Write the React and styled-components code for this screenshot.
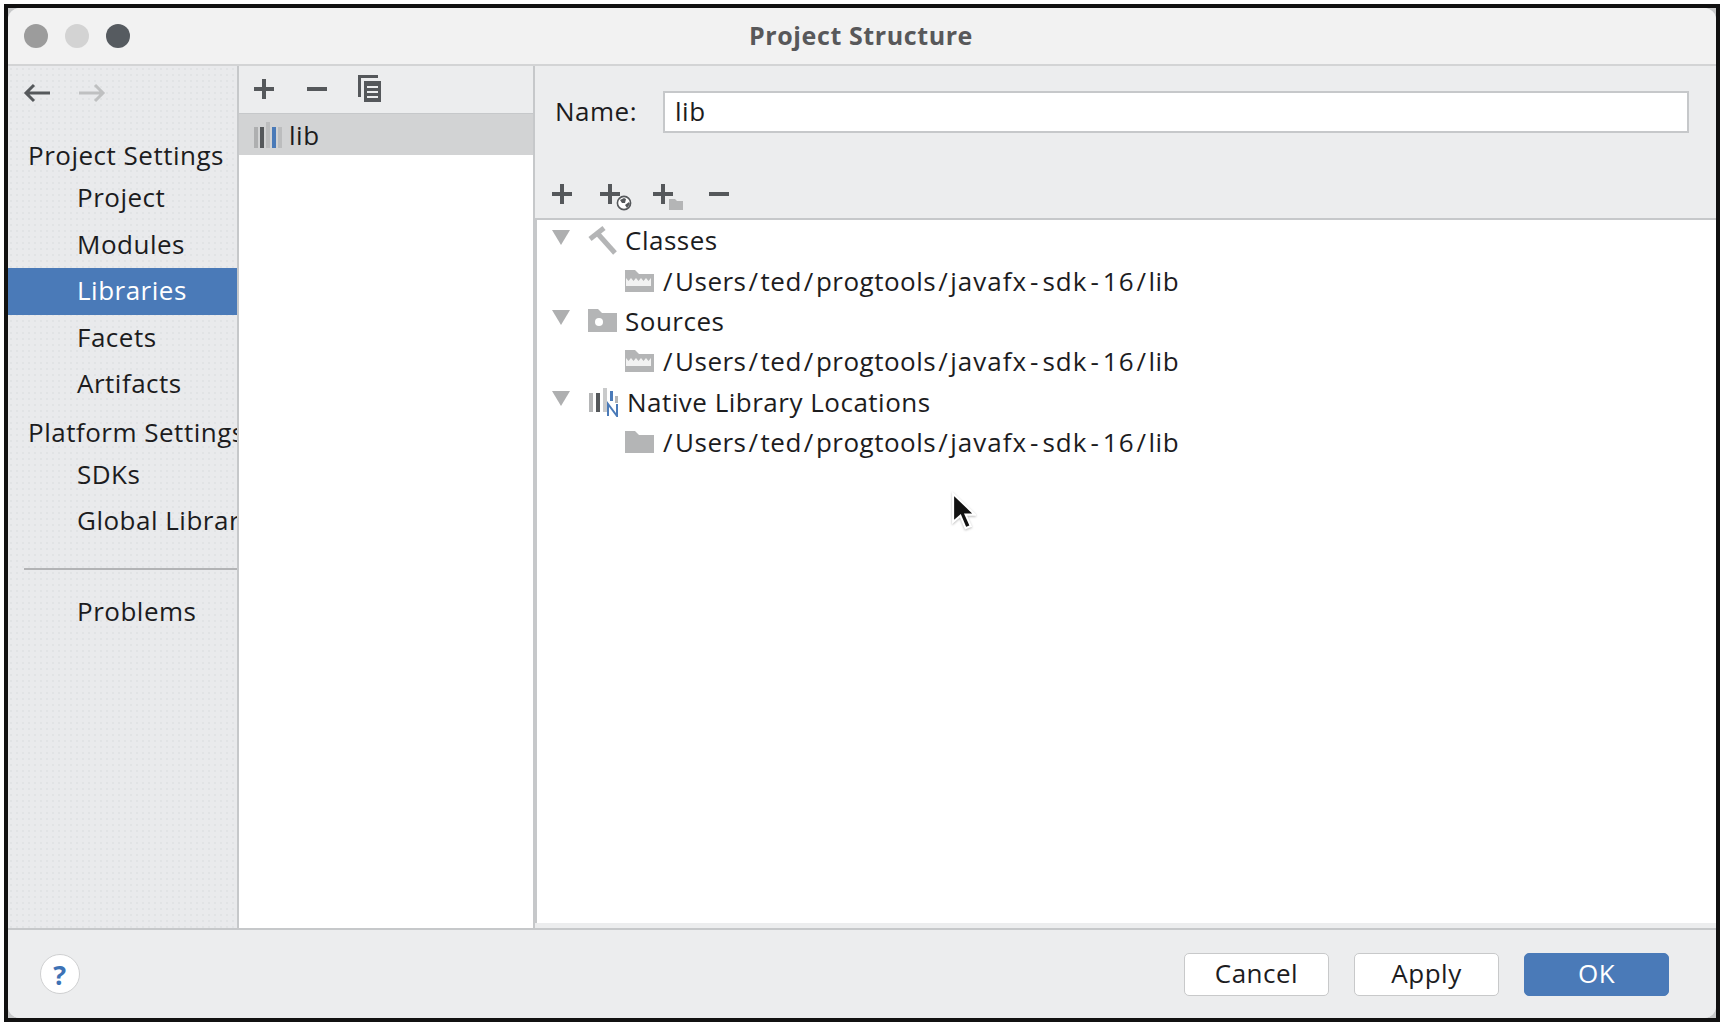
import React from "react";
import styled, { createGlobalStyle } from "styled-components";

const FONT = `"Open Sans", "DejaVu Sans", sans-serif`;
const ICON_DARK = "#55585b";
const ICON_GREY = "#b4b5b6";
const LINE = "#c6c8ca";
const BLUE = "#4a7ab8";

const GlobalStyle = createGlobalStyle`
  html, body {
    margin: 0;
    padding: 0;
    background: #fff;
  }
  * {
    box-sizing: border-box;
  }
`;

const Page = styled.div`
  width: 1725px;
  height: 1028px;
  padding: 4px 5px 6px 4px;
  background: #fff;
  font-family: ${FONT};
  font-size: 26px;
  letter-spacing: 0.5px;
  color: #1c1c1e;
`;

const Frame = styled.div`
  height: 100%;
  border: 4px solid #111;
  background: #c8c9ca;
`;

const Window = styled.div`
  height: 100%;
  display: flex;
  flex-direction: column;
  border-radius: 12px;
  overflow: hidden;
  background: #ecedee;
`;

const TitleBar = styled.div`
  position: relative;
  flex: 0 0 58px;
  display: flex;
  align-items: center;
  justify-content: center;
  padding-bottom: 2px;
  background: #f2f2f2;
  border-bottom: 2px solid #d3d4d5;
`;

const Lights = styled.div`
  position: absolute;
  left: 16px;
  top: 16px;
  display: flex;
  gap: 17px;
`;

const Light = styled.span`
  width: 24px;
  height: 24px;
  border-radius: 50%;
  background: ${(p) => p.$color};
`;

const Title = styled.div`
  font-weight: 700;
  font-size: 25px;
  letter-spacing: 0.6px;
  color: #58585a;
  transform: translateX(-1px);
`;

const Body = styled.div`
  flex: 1;
  min-height: 0;
  display: flex;
`;

const Sidebar = styled.nav`
  flex: 0 0 231px;
  overflow: hidden;
  white-space: nowrap;
  background-color: #e9eaec;
  background-image: radial-gradient(#e1e3e5 0.7px, transparent 0.9px);
  background-size: 6px 6px;
  border-right: 2px solid ${LINE};
  border-bottom: 2px solid ${LINE};
`;

const NavArrows = styled.div`
  height: 69px;
  padding: 17px 0 0 15px;
  display: flex;
  gap: 27px;
`;

const Heading = styled.div`
  height: 40px;
  margin-top: ${(p) => p.$gap || 0}px;
  padding-left: 20px;
  line-height: 40px;
`;

const NavItem = styled.div`
  height: 46.5px;
  padding-left: 69px;
  line-height: 44px;
  background: ${(p) => (p.$active ? BLUE : "transparent")};
  color: ${(p) => (p.$active ? "#fff" : "inherit")};
`;

const NavRule = styled.div`
  height: 2px;
  margin: 23px 0 19px 16px;
  background: #b2b3b5;
`;

const LibraryColumn = styled.section`
  flex: 0 0 296px;
  display: flex;
  flex-direction: column;
  border-right: 2px solid ${LINE};
  border-bottom: 2px solid ${LINE};
`;

const ListToolbar = styled.div`
  flex: 0 0 48px;
  padding: 0 0 2px 15px;
  display: flex;
  align-items: center;
  background: #ecedee;
  border-bottom: 1px solid ${LINE};
`;

const LibraryRow = styled.div`
  flex: 0 0 41px;
  display: flex;
  align-items: center;
  gap: 7px;
  padding-left: 15px;
  background: #d2d3d4;
`;

const LibraryFill = styled.div`
  flex: 1;
  background: #fff;
`;

const Detail = styled.section`
  flex: 1;
  display: flex;
  flex-direction: column;
  padding-bottom: 5px;
  border-bottom: 2px solid ${LINE};
`;

const NameRow = styled.div`
  flex: 0 0 67px;
  display: flex;
  align-items: flex-end;
  padding: 0 27px 0 20px;
  gap: 26px;
`;

const NameInput = styled.div`
  flex: 1;
  height: 42px;
  padding-left: 10px;
  line-height: 36px;
  background: #fff;
  border: 2px solid ${LINE};
`;

const NameLabel = styled.div`
  line-height: 40px;
  align-self: flex-end;
  margin-bottom: 2px;
`;

const TreeToolbar = styled.div`
  flex: 0 0 85px;
  display: flex;
  align-items: flex-start;
  padding: 51px 0 0 17px;
`;

const ToolSlot = styled.div`
  width: ${(p) => p.$width}px;
  display: flex;
`;

const Tree = styled.div`
  position: relative;
  flex: 1;
  background: #fff;
  border-top: 2px solid ${LINE};
  border-left: 2px solid ${LINE};
`;

const TreeRow = styled.div`
  height: 40.4px;
  display: flex;
  align-items: center;
  padding-left: ${(p) => (p.$nested ? 88 : 15)}px;
  white-space: nowrap;
`;

const Twisty = styled.span`
  width: 0;
  height: 0;
  margin: -6px 18px 0 0;
  border-left: 9px solid transparent;
  border-right: 9px solid transparent;
  border-top: 15px solid #aeafb0;
`;

const RowLabel = styled.span`
  margin-left: ${(p) => p.$gap}px;
`;

// the slashes and hyphens of the paths are wider in the reference than in this font
const Sep = styled.span`
  margin: 0 ${(p) => p.$space}px;
`;

const Wide = styled.span`
  letter-spacing: 1px;
`;

const Pointer = styled.svg`
  position: absolute;
  left: 414px;
  top: 271px;
  filter: drop-shadow(0 1px 1px #bbb);
`;

const Footer = styled.footer`
  flex: 0 0 88px;
  display: flex;
  align-items: center;
  padding: 0 47px 0 32px;
  gap: 25px;
  background: #ecedee;
`;

const HelpButton = styled.div`
  width: 40px;
  height: 40px;
  margin-right: auto;
  border-radius: 50%;
  display: flex;
  align-items: center;
  justify-content: center;
  background: #fff;
  border: 1px solid #cfd0d1;
  color: #3d72b5;
  font-weight: 700;
  font-size: 27px;
`;

const Button = styled.div`
  width: 145px;
  height: 43px;
  padding-bottom: 2px;
  border-radius: 5px;
  display: flex;
  align-items: center;
  justify-content: center;
  background: ${(p) => (p.$primary ? BLUE : "#fff")};
  color: ${(p) => (p.$primary ? "#fff" : "inherit")};
  border: 1px solid ${(p) => (p.$primary ? BLUE : "#c8c9ca")};
`;

const Arrow = ({ flip, color }) => (
  <svg width="28" height="20" viewBox="0 0 28 20" fill="none" stroke={color} strokeWidth="3" style={flip ? { transform: "scaleX(-1)" } : undefined}>
    <path d="M27 10H3M11 2l-8 8 8 8" />
  </svg>
);

const Plus = () => (
  <svg width="20" height="20" viewBox="0 0 20 20" fill={ICON_DARK}>
    <path d="M8 0h4v8h8v4h-8v8H8v-8H0V8h8z" />
  </svg>
);

const Minus = () => (
  <svg width="20" height="20" viewBox="0 0 20 20" fill={ICON_DARK}>
    <rect y="8" width="20" height="4" />
  </svg>
);

const CopyIcon = () => (
  <svg width="24" height="28" viewBox="0 0 24 28" fill="none" stroke={ICON_DARK}>
    <path d="M1.5 22V1.5H20" strokeWidth="3" />
    <path d="M6 6h17v21H6z" fill={ICON_DARK} stroke="none" />
    <path d="M9 12h11M9 17h11M9 22h11" stroke="#ecedee" strokeWidth="2" />
  </svg>
);

const PlusGlobe = () => (
  <svg width="36" height="28" viewBox="0 0 36 28">
    <path d="M8 0h4v8h8v4h-8v8H8v-8H0V8h8z" fill={ICON_DARK} />
    <circle cx="24" cy="19" r="6.6" fill="#fff" stroke={ICON_DARK} strokeWidth="1.6" />
    <path d="M20 16l4-2 2 1-1 4-3 0zM25 21l4-3 1 2-3 4z" fill={ICON_DARK} />
  </svg>
);

const PlusFolder = () => (
  <svg width="36" height="28" viewBox="0 0 36 28">
    <path d="M8 0h4v8h8v4h-8v8H8v-8H0V8h8z" fill={ICON_DARK} />
    <path d="M16 15h6l2 2h6v9H16z" fill={ICON_GREY} />
  </svg>
);

const LibBars = () => (
  <svg width="28" height="26" viewBox="0 0 28 26">
    <rect x="0" y="5" width="4" height="21" fill="#aeafb0" />
    <rect x="6" y="5" width="4" height="21" fill={ICON_DARK} />
    <rect x="12" y="0" width="4" height="26" fill="#bcbdbe" />
    <rect x="18" y="5" width="4" height="21" fill={BLUE} />
    <rect x="24" y="5" width="4" height="21" fill="#bcbdbe" />
  </svg>
);

const NativeBars = () => (
  <svg width="32" height="30" viewBox="0 0 32 30">
    <rect x="1" y="6" width="4" height="19" fill={ICON_GREY} />
    <rect x="8" y="6" width="4" height="19" fill={ICON_DARK} />
    <rect x="15" y="1" width="4" height="24" fill="#c9cacb" />
    <rect x="22" y="4" width="3" height="10" fill={BLUE} />
    <rect x="27" y="9" width="3" height="7" fill={ICON_GREY} />
    <path d="M20 29V17l9 12V17" fill="none" stroke={BLUE} strokeWidth="2" />
  </svg>
);

const HammerIcon = () => (
  <svg width="30" height="29" viewBox="0 0 30 29" fill="none" stroke={ICON_GREY} strokeWidth="5">
    <path d="M2 13L16 2" />
    <path d="M10 8l17 19" />
  </svg>
);

const JarFolder = () => (
  <svg width="30" height="22" viewBox="0 0 30 22">
    <path d="M0 0h10l4 4h15v18H0z" fill={ICON_GREY} />
    <path d="M1 8l2.5 3 2.5-3 2.5 3 2.5-3 2.5 3 2.5-3 2.5 3 2.5-3 2.5 3 2.5-3v8H1z" fill="#f2f2f2" />
  </svg>
);

const SourceFolder = () => (
  <svg width="30" height="23" viewBox="0 0 30 23">
    <path d="M0 0h10l4 4h15v19H0z" fill={ICON_GREY} />
    <circle cx="11" cy="13" r="4" fill="#fff" />
  </svg>
);

const PlainFolder = () => (
  <svg width="30" height="22" viewBox="0 0 30 22">
    <path d="M0 0h10l4 4h15v18H0z" fill={ICON_GREY} />
  </svg>
);

const PathRow = ({ icon }) => (
  <TreeRow $nested>
    {icon}
    <RowLabel $gap={6}>
      <Sep $space={2}>/</Sep>Users
      <Sep $space={2}>/</Sep>ted
      <Sep $space={2}>/</Sep>progtools
      <Sep $space={2}>/</Sep>
      <Wide>
        javafx<Sep $space={3}>-</Sep>sdk<Sep $space={3}>-</Sep>16
      </Wide>
      <Sep $space={2}>/</Sep>lib
    </RowLabel>
  </TreeRow>
);

const GroupRow = ({ icon, label }) => (
  <TreeRow>
    <Twisty />
    {icon}
    <RowLabel $gap={7}>{label}</RowLabel>
  </TreeRow>
);

export default function App() {
  return (
    <>
      <GlobalStyle />
      <Page>
        <Frame>
          <Window>
            <TitleBar>
              <Lights>
                <Light $color="#9c9c9c" />
                <Light $color="#d3d3d3" />
                <Light $color="#565b60" />
              </Lights>
              <Title>Project Structure</Title>
            </TitleBar>
            <Body>
              <Sidebar>
                <NavArrows>
                  <Arrow color={ICON_DARK} />
                  <Arrow flip color="#bfc0c1" />
                </NavArrows>
                <Heading>Project Settings</Heading>
                <NavItem>Project</NavItem>
                <NavItem>Modules</NavItem>
                <NavItem $active>Libraries</NavItem>
                <NavItem>Facets</NavItem>
                <NavItem>Artifacts</NavItem>
                <Heading $gap={4}>Platform Settings</Heading>
                <NavItem>SDKs</NavItem>
                <NavItem>Global Libraries</NavItem>
                <NavRule />
                <NavItem>Problems</NavItem>
              </Sidebar>
              <LibraryColumn>
                <ListToolbar>
                  <ToolSlot $width={53}><Plus /></ToolSlot>
                  <ToolSlot $width={51}><Minus /></ToolSlot>
                  <CopyIcon />
                </ListToolbar>
                <LibraryRow>
                  <LibBars />
                  <span>lib</span>
                </LibraryRow>
                <LibraryFill />
              </LibraryColumn>
              <Detail>
                <NameRow>
                  <NameLabel>Name:</NameLabel>
                  <NameInput>lib</NameInput>
                </NameRow>
                <TreeToolbar>
                  <ToolSlot $width={48}><Plus /></ToolSlot>
                  <ToolSlot $width={53}><PlusGlobe /></ToolSlot>
                  <ToolSlot $width={56}><PlusFolder /></ToolSlot>
                  <ToolSlot $width={20}><Minus /></ToolSlot>
                </TreeToolbar>
                <Tree>
                  <GroupRow icon={<HammerIcon />} label="Classes" />
                  <PathRow icon={<JarFolder />} />
                  <GroupRow icon={<SourceFolder />} label="Sources" />
                  <PathRow icon={<JarFolder />} />
                  <GroupRow icon={<NativeBars />} label="Native Library Locations" />
                  <PathRow icon={<PlainFolder />} />
                  <Pointer width="25" height="41" viewBox="0 0 24 38">
                    <path d="M2 2v27l7-6 5 12 5-2-5-11h9z" fill="#111" stroke="#fff" strokeWidth="2" />
                  </Pointer>
                </Tree>
              </Detail>
            </Body>
            <Footer>
              <HelpButton>?</HelpButton>
              <Button>Cancel</Button>
              <Button>Apply</Button>
              <Button $primary>OK</Button>
            </Footer>
          </Window>
        </Frame>
      </Page>
    </>
  );
}
